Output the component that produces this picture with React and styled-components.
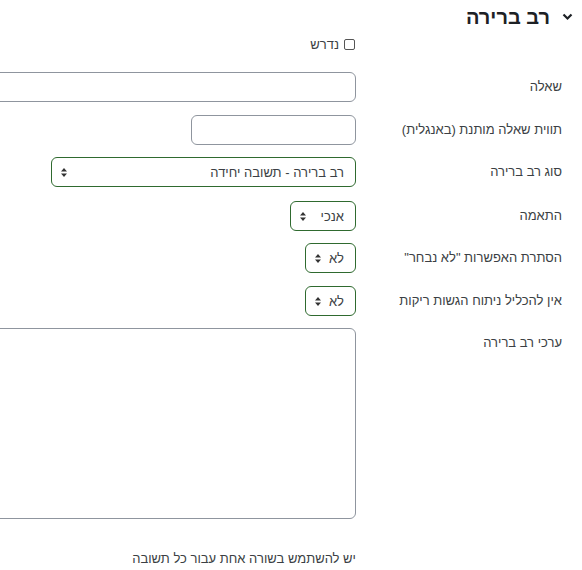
import React from 'react';
import styled, { createGlobalStyle } from 'styled-components';

const GlobalStyle = createGlobalStyle`
html, body {
    margin: 0;
    padding: 0;
    background: #ffffff;
    direction: rtl;
    overflow: hidden;
}
body {
    font-family: "Liberation Sans", "DejaVu Sans", sans-serif;
    color: #1d2125;
}
`;

const Page = styled.div`
padding: 0 20px 0 0;
width: 562px;
`;

const Header = styled.div`
display: flex;
align-items: center;
gap: 12px;
height: 34px;
margin-right: -11px;
`;

const Chevron = styled.svg`
width: 11px;
height: 8px;
flex: none;
`;

const Title = styled.h3`
margin: 0;
font-size: 20px;
font-weight: 700;
color: #1d2125;
`;

const Row = styled.div`
display: grid;
grid-template-columns: 206px 356px;
align-items: start;
margin-bottom: ${p => (p.$gap === undefined ? 13 : p.$gap)}px;
`;

const Label = styled.div`
font-size: 13px;
line-height: 30px;
color: #3b3f44;
white-space: nowrap;
`;

const Field = styled.div`
display: flex;
justify-content: flex-start;
min-width: 0;
`;

const CheckLabel = styled.label`
display: flex;
align-items: center;
gap: 5px;
height: 20px;
font-size: 13px;
color: #3b3f44;
`;

const CheckBox = styled.span`
width: 9px;
height: 9px;
border: 1px solid #555;
border-radius: 2px;
background: #fff;
margin-right: 1px;
`;

const Input = styled.div`
box-sizing: border-box;
height: 30px;
width: ${p => (p.$width ? `${p.$width}px` : 'auto')};
flex: ${p => (p.$width ? 'none' : '1')};
margin-left: ${p => (p.$width ? 0 : -14)}px;
border: 1px solid #8f959e;
border-radius: 6px;
background: #fff;
`;

const Select = styled.div`
box-sizing: border-box;
display: flex;
align-items: center;
justify-content: space-between;
height: 30px;
width: ${p => p.$width}px;
padding: 0 11px 0 9px;
border: 1px solid #2f6a2f;
border-radius: 6px;
background: #fff;
font-size: 13px;
color: #3b3f44;
`;

const Arrows = styled.svg`
width: 6px;
height: 9px;
flex: none;
`;

const TextArea = styled.div`
box-sizing: border-box;
flex: 1;
height: 191px;
margin-left: -14px;
border: 1px solid #8f959e;
border-radius: 6px;
background: #fff;
`;

const Help = styled.div`
font-size: 13px;
line-height: 15px;
color: #3b3f44;
`;

const SelectArrows = () => (
    <Arrows viewBox="0 0 6 9">
        <path d="M3 0 L6 3.6 L0 3.6 Z M3 9 L6 5.4 L0 5.4 Z" fill="#333" />
    </Arrows>
);

const SelectBox = ({ width, value }) => (
    <Select $width={width}>
        <span>{value}</span>
        <SelectArrows />
    </Select>
);

const App = () => (
    <>
        <GlobalStyle />
        <Page>
            <Header>
                <Chevron viewBox="0 0 11 8">
                    <polyline points="1.5,1.5 5.5,5.5 9.5,1.5" fill="none" stroke="#1d2125" strokeWidth="2.2" />
                </Chevron>
                <Title>רב ברירה</Title>
            </Header>
            <Row $gap={18}>
                <div />
                <Field>
                    <CheckLabel>
                        <CheckBox />
                        נדרש
                    </CheckLabel>
                </Field>
            </Row>
            <Row>
                <Label>שאלה</Label>
                <Field><Input /></Field>
            </Row>
            <Row $gap={12}>
                <Label>תווית שאלה מותנת (באנגלית)</Label>
                <Field><Input $width={165} /></Field>
            </Row>
            <Row $gap={14}>
                <Label>סוג רב ברירה</Label>
                <Field><SelectBox width={305} value="רב ברירה - תשובה יחידה" /></Field>
            </Row>
            <Row $gap={12}>
                <Label>התאמה</Label>
                <Field><SelectBox width={66} value="אנכי" /></Field>
            </Row>
            <Row>
                <Label>הסתרת האפשרות "לא נבחר"</Label>
                <Field><SelectBox width={51} value="לא" /></Field>
            </Row>
            <Row $gap={12}>
                <Label>אין להכליל ניתוח הגשות ריקות</Label>
                <Field><SelectBox width={51} value="לא" /></Field>
            </Row>
            <Row $gap={32}>
                <Label>ערכי רב ברירה</Label>
                <Field><TextArea /></Field>
            </Row>
            <Row>
                <div />
                <Field><Help>יש להשתמש בשורה אחת עבור כל תשובה</Help></Field>
            </Row>
        </Page>
    </>
);

export default App;
